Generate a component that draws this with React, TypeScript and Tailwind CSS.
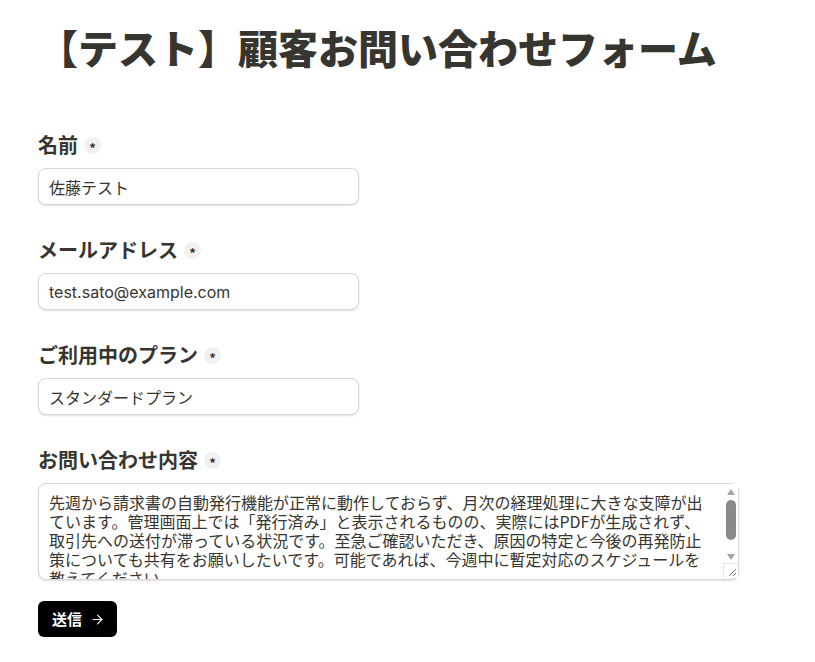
import { ArrowRight } from 'lucide-react';

const jp = '[font-family:"Noto_Sans_CJK_JP","Noto_Sans",sans-serif]';

const message =
  '先週から請求書の自動発行機能が正常に動作しておらず、月次の経理処理に大きな支障が出ています。管理画面上では「発行済み」と表示されるものの、実際にはPDFが生成されず、取引先への送付が滞っている状況です。至急ご確認いただき、原因の特定と今後の再発防止策についても共有をお願いしたいです。可能であれば、今週中に暫定対応のスケジュールを教えてください。';

function Label({ text }: { text: string }) {
  return (
    <div className="flex h-[28px] items-center gap-[6px]">
      <span className="text-[20px] font-bold leading-[28px] text-[#37352f]">{text}</span>
      <span className="flex h-[17px] w-[17px] items-center justify-center rounded-full bg-[#f1f1ef] pt-[4px] text-[13px] font-bold leading-none text-[#37352f]">
        *
      </span>
    </div>
  );
}

function TextField({ label, value }: { label: string; value: string }) {
  return (
    <div className="flex flex-col gap-[9px]">
      <Label text={label} />
      <input
        readOnly
        value={value}
        className="h-[37px] w-[321px] rounded-[8px] border border-[#d6d6d3] bg-white px-[10px] text-[16px] text-[#37352f] shadow-[0_1px_2px_rgba(0,0,0,0.12)] outline-none [font-family:Inter,'Noto_Sans_CJK_JP',sans-serif]"
      />
    </div>
  );
}

function FakeScrollbar() {
  return (
    <div className="pointer-events-none absolute right-[1px] top-[1px] flex h-[94px] w-[15px] flex-col items-center bg-white">
      <div className="mt-[5px] h-0 w-0 border-x-[4.5px] border-b-[6px] border-x-transparent border-b-[#a3a3a3]" />
      <div className="mt-[5px] h-[40px] w-[10px] rounded-full bg-[#8a8a8a]" />
      <div className="mt-[14px] h-0 w-0 border-x-[4.5px] border-t-[6px] border-x-transparent border-t-[#a3a3a3]" />
      <div className="mt-auto h-[15px] w-[15px] border-l border-t border-[#e5e5e5] bg-white">
        <svg width="14" height="14" viewBox="0 0 14 14" className="block">
          <path d="M12 5 L5 12 M12 9 L9 12" stroke="#777" strokeWidth="1" />
        </svg>
      </div>
    </div>
  );
}

export default function App() {
  return (
    <div className={`min-h-[662px] bg-white pl-[38px] pt-[19px] text-[#37352f] ${jp}`}>
      <h1 className="text-[40px] font-black leading-[56px] text-[#37352f]">
        【テスト】顧客お問い合わせフォーム
      </h1>
      <div className="mt-[56px] flex flex-col gap-[31px]">
        <TextField label="名前" value="佐藤テスト" />
        <TextField label="メールアドレス" value="test.sato@example.com" />
        <TextField label="ご利用中のプラン" value="スタンダードプラン" />
        <div className="flex flex-col gap-[9px]">
          <Label text="お問い合わせ内容" />
          <div className="relative w-[701px]">
            <textarea
              readOnly
              defaultValue={message}
              className={`block h-[97px] w-[701px] resize-none overflow-hidden rounded-[8px] border border-[#d6d6d3] bg-white pb-[4px] pl-[10px] pr-[26px] pt-[9px] text-[16px] leading-[19px] text-[#37352f] shadow-[0_1px_2px_rgba(0,0,0,0.12)] outline-none ${jp}`}
            />
            <FakeScrollbar />
          </div>
        </div>
      </div>
      <button className="mt-[21px] flex h-[36px] w-[79px] items-center gap-[8px] rounded-[6px] bg-black pl-[14px] text-[15px] font-bold text-white">
        送信
        <ArrowRight className="h-[15px] w-[15px]" strokeWidth={1.75} />
      </button>
    </div>
  );
}
